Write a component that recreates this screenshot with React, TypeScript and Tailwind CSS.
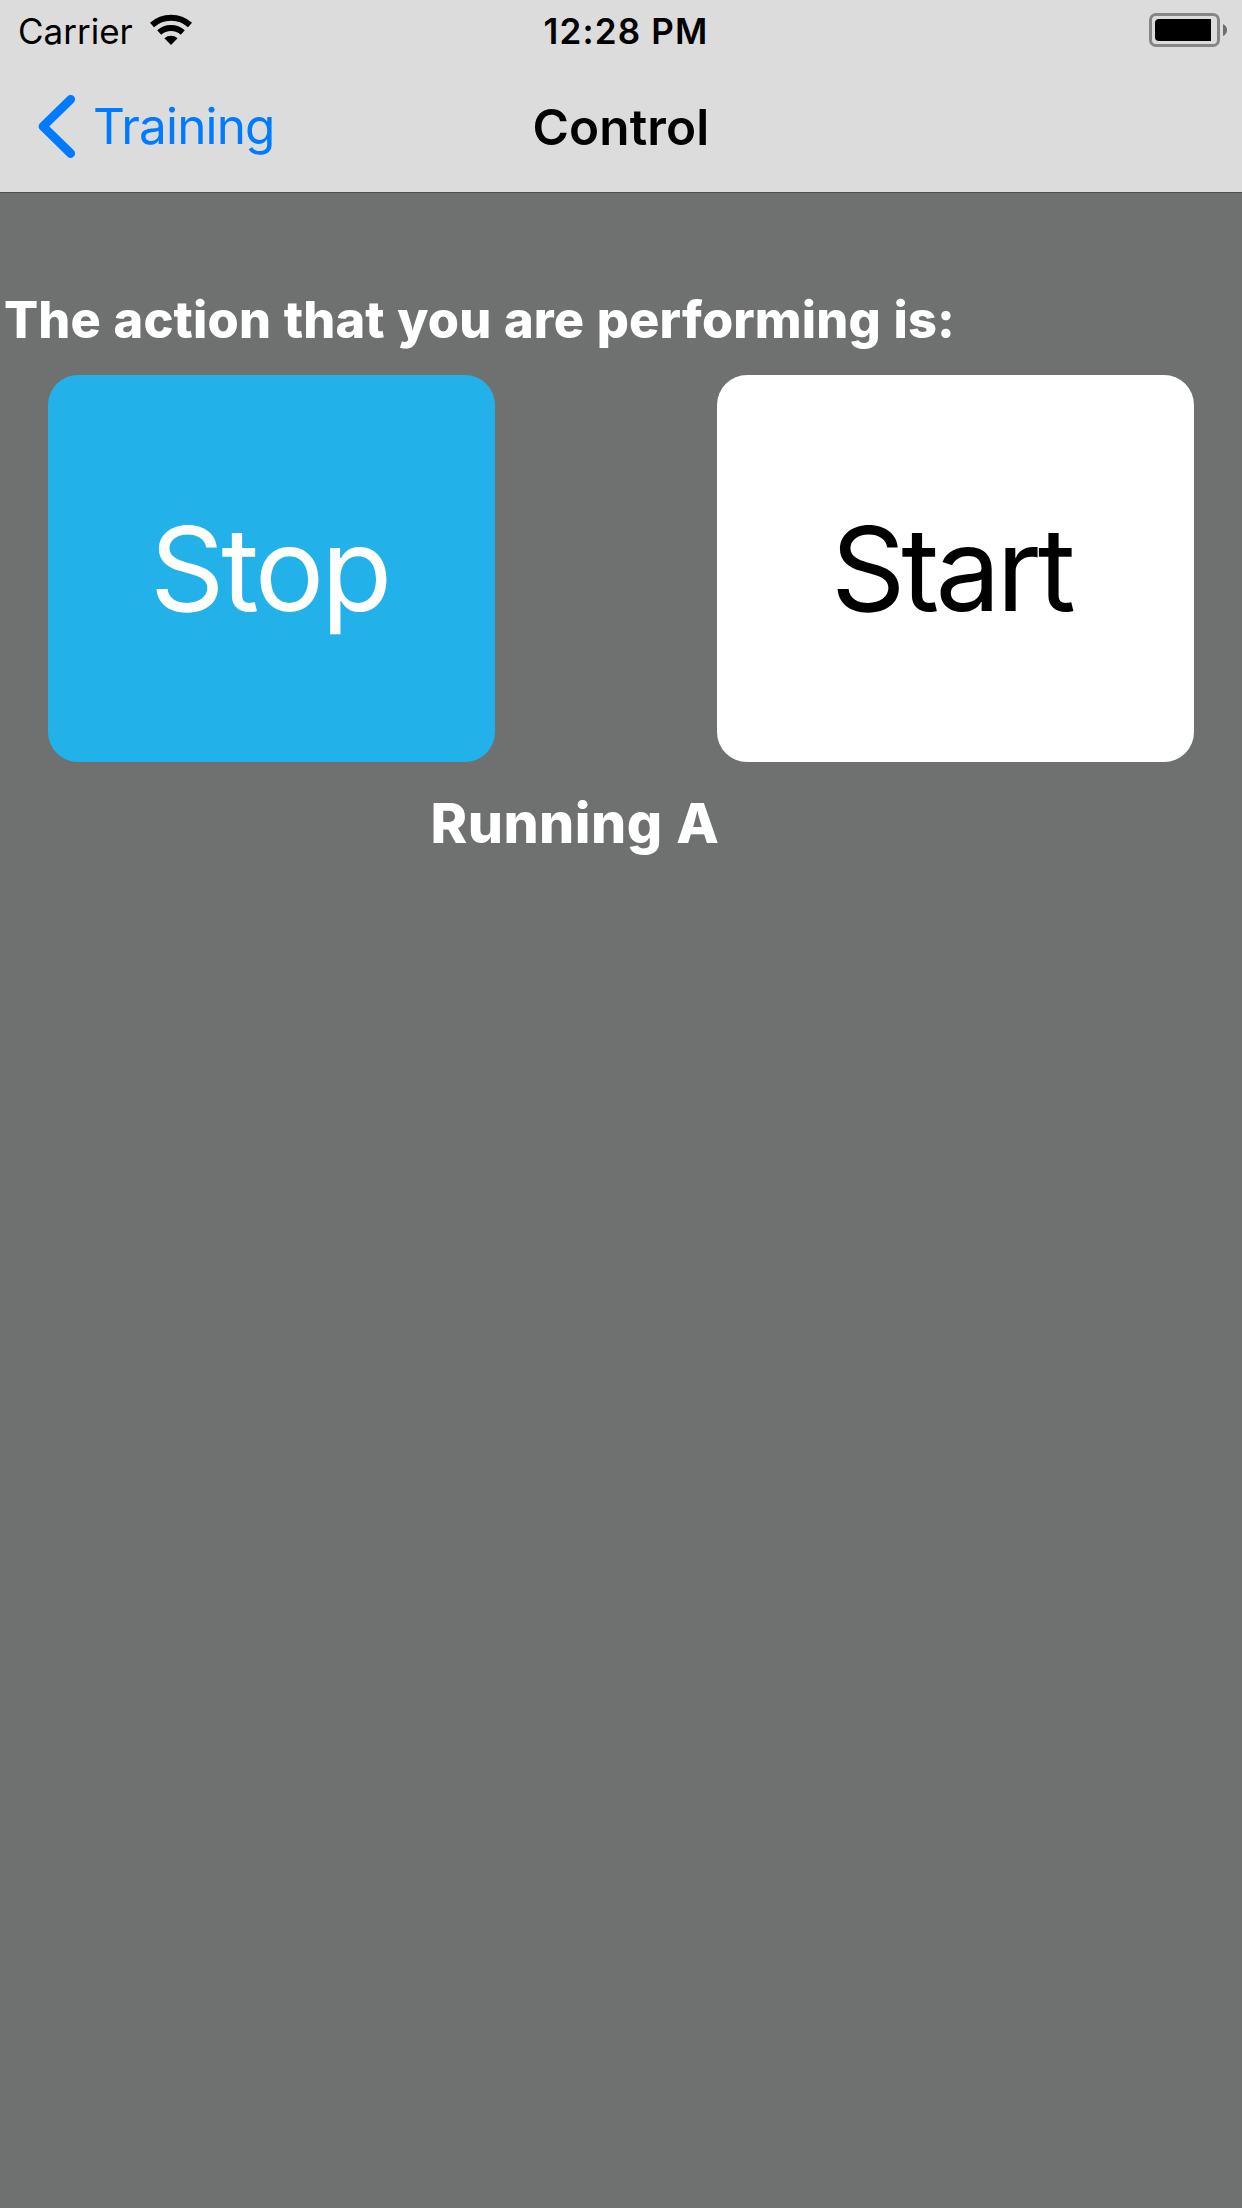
function WifiIcon() {
  return (
    <svg className="ml-[16px] mt-[14px] h-[32px] w-[44px]" viewBox="149 14 44 32" fill="none">
      <path d="M152 25 A28.5 28.5 0 0 1 190 25" stroke="#000" strokeWidth="6" />
      <path d="M159.2 32.6 A17.6 17.6 0 0 1 182.8 32.6" stroke="#000" strokeWidth="6" />
      <path d="M164.4 38.2 A10.4 10.4 0 0 1 177.6 38.2 L171 45 Z" fill="#000" />
    </svg>
  );
}

function BatteryIcon() {
  return (
    <svg className="mr-[14px] mt-[12px] h-[36px] w-[80px]" viewBox="1148 12 80 36" fill="none">
      <rect x="1150.5" y="14.5" width="68" height="31" rx="5.5" stroke="#868686" strokeWidth="3" />
      <path d="M1159 19 H1211 V41 H1159 A4 4 0 0 1 1155 37 V23 A4 4 0 0 1 1159 19 Z" fill="#000" />
      <path d="M1223 24 Q1227 26 1227 30 Q1227 34 1223 36 Z" fill="#6e6e6e" />
    </svg>
  );
}

function BackChevron() {
  return (
    <svg className="ml-[37px] mt-[31px] h-[68px] w-[40px] shrink-0" viewBox="37 93 40 68" fill="none">
      <path d="M70.7 99.3 L43 126.4 L70.7 153.5" stroke="#007aff" strokeWidth="8.8" strokeLinecap="round" strokeLinejoin="round" />
    </svg>
  );
}

export default function App() {
  return (
    <div className="flex h-[2208px] w-[1242px] flex-col overflow-hidden bg-[#6f7170] font-['Inter',sans-serif]">
      <header className="h-[193px] shrink-0 border-b border-[#4d4e4e] bg-[#dcdcdc] text-black">
        <div className="grid h-[62px] grid-cols-3 leading-[62px] text-[35px]">
          <div className="flex pl-[18px]">
            <span>Carrier</span>
            <WifiIcon />
          </div>
          <div className="pl-[129.5px] font-[560] tracking-[1.15px]">12:28 PM</div>
          <div className="flex justify-end">
            <BatteryIcon />
          </div>
        </div>
        <nav className="grid h-[130px] grid-cols-3 text-[49.5px]">
          <button className="flex items-start text-left leading-[128px] tracking-[-0.85px] text-[#007aff]">
            <BackChevron />
            <span className="ml-[16px]">Training</span>
          </button>
          <h1 className="pl-[118.5px] leading-[130px] font-semibold tracking-[0.1px]">Control</h1>
        </nav>
      </header>

      <main className="pt-[97px] font-extrabold text-white">
        <p className="pl-[4px] text-[50.5px] leading-[60px] tracking-[0.15px] [word-spacing:1.3px]">
          The action that you are performing is:
        </p>
        <div className="mt-[25px] flex justify-between px-[48px] font-normal">
          <button className="h-[387px] w-[447px] rounded-[30px] bg-[#22b1e8] pl-[102px] text-left text-[116px] leading-[389px] tracking-[-3.2px] text-white">
            Stop
          </button>
          <button className="h-[387px] w-[477px] rounded-[30px] bg-white pl-[114px] text-left text-[116px] leading-[389px] tracking-[-4.2px] text-black">
            Start
          </button>
        </div>
        <p className="mt-[28px] pl-[430.5px] text-[55.5px] leading-[66px] tracking-[0.45px] [word-spacing:1px]">Running A</p>
      </main>
    </div>
  );
}
